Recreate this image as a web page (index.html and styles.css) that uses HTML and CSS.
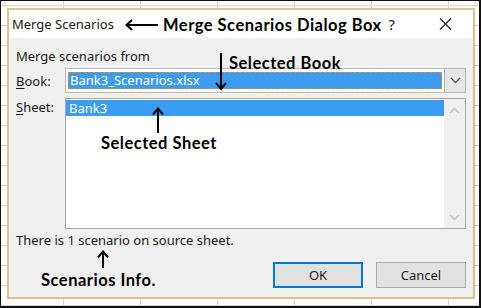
FILE: index.html
```html
<!DOCTYPE html>
<html>
<head>
    <title>Merge Scenarios</title>
    <link rel="stylesheet" href="styles.css">
</head>
<body>
    <div class="screen">
        <div class="dialog">
            <div class="titlebar">
                <span class="title">Merge Scenarios</span>
                <span class="help">?</span>
                <svg class="close" width="13" height="12" viewBox="0 0 13 12">
                    <path d="M1 0.5 L12 11.5 M12 0.5 L1 11.5" stroke="#2b2b2b" stroke-width="1.2" fill="none"/>
                </svg>
            </div>
            <div class="body">
                <div class="from">Merge scenarios from</div>
                <div class="row">
                    <label class="lbl"><u>B</u>ook:</label>
                    <div class="combo">
                        <div class="combo-field"><span class="combo-sel">Bank3_Scenarios.xlsx</span></div>
                        <div class="combo-btn">
                            <svg width="11" height="7" viewBox="0 0 11 7"><path d="M1 1 L5.5 5.5 L10 1" stroke="#555" stroke-width="1.3" fill="none"/></svg>
                        </div>
                    </div>
                </div>
                <div class="row sheet-row">
                    <label class="lbl"><u>S</u>heet:</label>
                    <div class="list">
                        <div class="list-items">
                            <div class="list-sel">Bank3</div>
                        </div>
                        <div class="scrollbar">
                            <svg width="11" height="7" viewBox="0 0 11 7"><path d="M1 6 L5.5 1.5 L10 6" stroke="#bdbdbd" stroke-width="1.3" fill="none"/></svg>
                            <svg width="11" height="7" viewBox="0 0 11 7"><path d="M1 1 L5.5 5.5 L10 1" stroke="#bdbdbd" stroke-width="1.3" fill="none"/></svg>
                        </div>
                    </div>
                </div>
                <div class="info">There is 1 scenario on source sheet.</div>
                <div class="buttons">
                    <button class="btn ok">OK</button>
                    <button class="btn">Cancel</button>
                </div>
            </div>
        </div>

        <!-- callouts drawn over the dialog -->
        <div class="note note-dialog">
            <svg width="34" height="12" viewBox="0 0 34 12"><path d="M33 6 H2 M7 1 L1.5 6 L7 11" stroke="#000" stroke-width="2" fill="none"/></svg>
            <span>Merge Scenarios Dialog Box</span>
        </div>
        <svg class="arrow arrow-book" width="12" height="38" viewBox="0 0 12 38"><path d="M6 0 V36 M1 30 L6 36 L11 30" stroke="#000" stroke-width="2" fill="none"/></svg>
        <div class="note note-book">Selected Book</div>
        <svg class="arrow arrow-sheet" width="12" height="26" viewBox="0 0 12 26"><path d="M6 26 V2 M1 7.5 L6 1.5 L11 7.5" stroke="#000" stroke-width="2" fill="none"/></svg>
        <div class="note note-sheet">Selected Sheet</div>
        <svg class="arrow arrow-info" width="12" height="18" viewBox="0 0 12 18"><path d="M6 18 V2 M1 7.5 L6 1.5 L11 7.5" stroke="#000" stroke-width="2" fill="none"/></svg>
        <div class="note note-info">Scenarios Info.</div>
    </div>
</body>
</html>
```

FILE: styles.css
```css
body {
    margin: 0;
    background: #fff;
}

.screen {
    position: relative;
    width: 481px;
    height: 308px;
    box-sizing: border-box;
    border-style: solid;
    border-color: #111;
    border-width: 1px 2px 2px 1px;
    padding: 7px 4px 7px 6px;
    background-color: #fff;
    background-image:
        repeating-linear-gradient(to right, transparent 0, transparent 62px, #d4d4d4 62px, #d4d4d4 63px, transparent 63px, transparent 77px),
        repeating-linear-gradient(to bottom, transparent 0, transparent 4px, #d4d4d4 4px, #d4d4d4 5px, transparent 5px, transparent 20px);
    font-family: "Noto Sans", "Open Sans", sans-serif;
    color: #1a1a1a;
}

.dialog {
    height: 100%;
    box-sizing: border-box;
    border: 2px solid #e3c08e;
    background: #f0f0f0;
    display: flex;
    flex-direction: column;
}

.titlebar {
    height: 28px;
    background: #fff;
    display: flex;
    align-items: center;
    padding: 0 21px 0 3px;
}

.title {
    font-size: 13px;
    flex: 1;
}

.help {
    font-size: 15px;
    margin-right: 44px;
    color: #222;
}

.body {
    flex: 1;
    display: flex;
    flex-direction: column;
    padding: 10px 7px 9px 7px;
    font-size: 13px;
}

.from {
    line-height: 16px;
    margin-bottom: 4px;
}

.row {
    display: flex;
    align-items: center;
}

.lbl {
    width: 49px;
    line-height: 16px;
}

.lbl u {
    text-decoration-thickness: 1px;
    text-underline-offset: 2px;
}

.combo {
    flex: 1;
    height: 25px;
    box-sizing: border-box;
    border: 1px solid #b9b9b9;
    background: #fff;
    display: flex;
}

.combo-field {
    flex: 1;
    padding: 3px 2px 3px 2px;
    display: flex;
}

.combo-sel {
    flex: 1;
    background: #3c9cf2;
    border: 1px dashed #e08a2c;
    color: #fff;
    line-height: 15px;
    padding-left: 1px;
}

.combo-btn {
    width: 20px;
    background: #e6e6e6;
    border-left: 1px solid #adadad;
    display: flex;
    align-items: center;
    justify-content: center;
}

.sheet-row {
    align-items: flex-start;
    margin-top: 5px;
}

.sheet-row .lbl {
    margin-top: 1px;
}

.list {
    flex: 1;
    height: 131px;
    box-sizing: border-box;
    border: 1px solid #a5a8ad;
    background: #fff;
    display: flex;
}

.list-items {
    flex: 1;
    padding-top: 1px;
}

.list-sel {
    background: #3c9cf2;
    color: #fff;
    line-height: 16px;
    padding-left: 3px;
}

.scrollbar {
    width: 21px;
    background: #f0f0f0;
    display: flex;
    flex-direction: column;
    justify-content: space-between;
    align-items: center;
    padding: 8px 0 7px;
}

.info {
    margin-top: 3px;
    line-height: 16px;
    padding-left: 0;
}

.buttons {
    margin-top: auto;
    display: flex;
    justify-content: flex-end;
    gap: 13px;
}

.btn {
    width: 90px;
    height: 26px;
    box-sizing: border-box;
    border: 1px solid #adadad;
    background: #e1e1e1;
    font-family: "Noto Sans", "Open Sans", sans-serif;
    font-size: 13px;
    color: #1a1a1a;
    padding: 0;
}

.btn.ok {
    border: 2px solid #0078d7;
}

.note {
    position: absolute;
    font-family: Lato, "Open Sans", sans-serif;
    font-weight: bold;
    font-size: 16.5px;
    letter-spacing: 0.5px;
    color: #000;
    line-height: 18px;
    white-space: nowrap;
}

.note-dialog {
    left: 124px;
    top: 15px;
    display: flex;
    align-items: center;
    gap: 4px;
}

.note-book {
    left: 228px;
    top: 53px;
}

.note-sheet {
    left: 100px;
    top: 133px;
}

.note-info {
    left: 40px;
    top: 270px;
}

.arrow {
    position: absolute;
}

.arrow-book {
    left: 214px;
    top: 52px;
}

.arrow-sheet {
    left: 151px;
    top: 106px;
}

.arrow-info {
    left: 96px;
    top: 249px;
}
```
